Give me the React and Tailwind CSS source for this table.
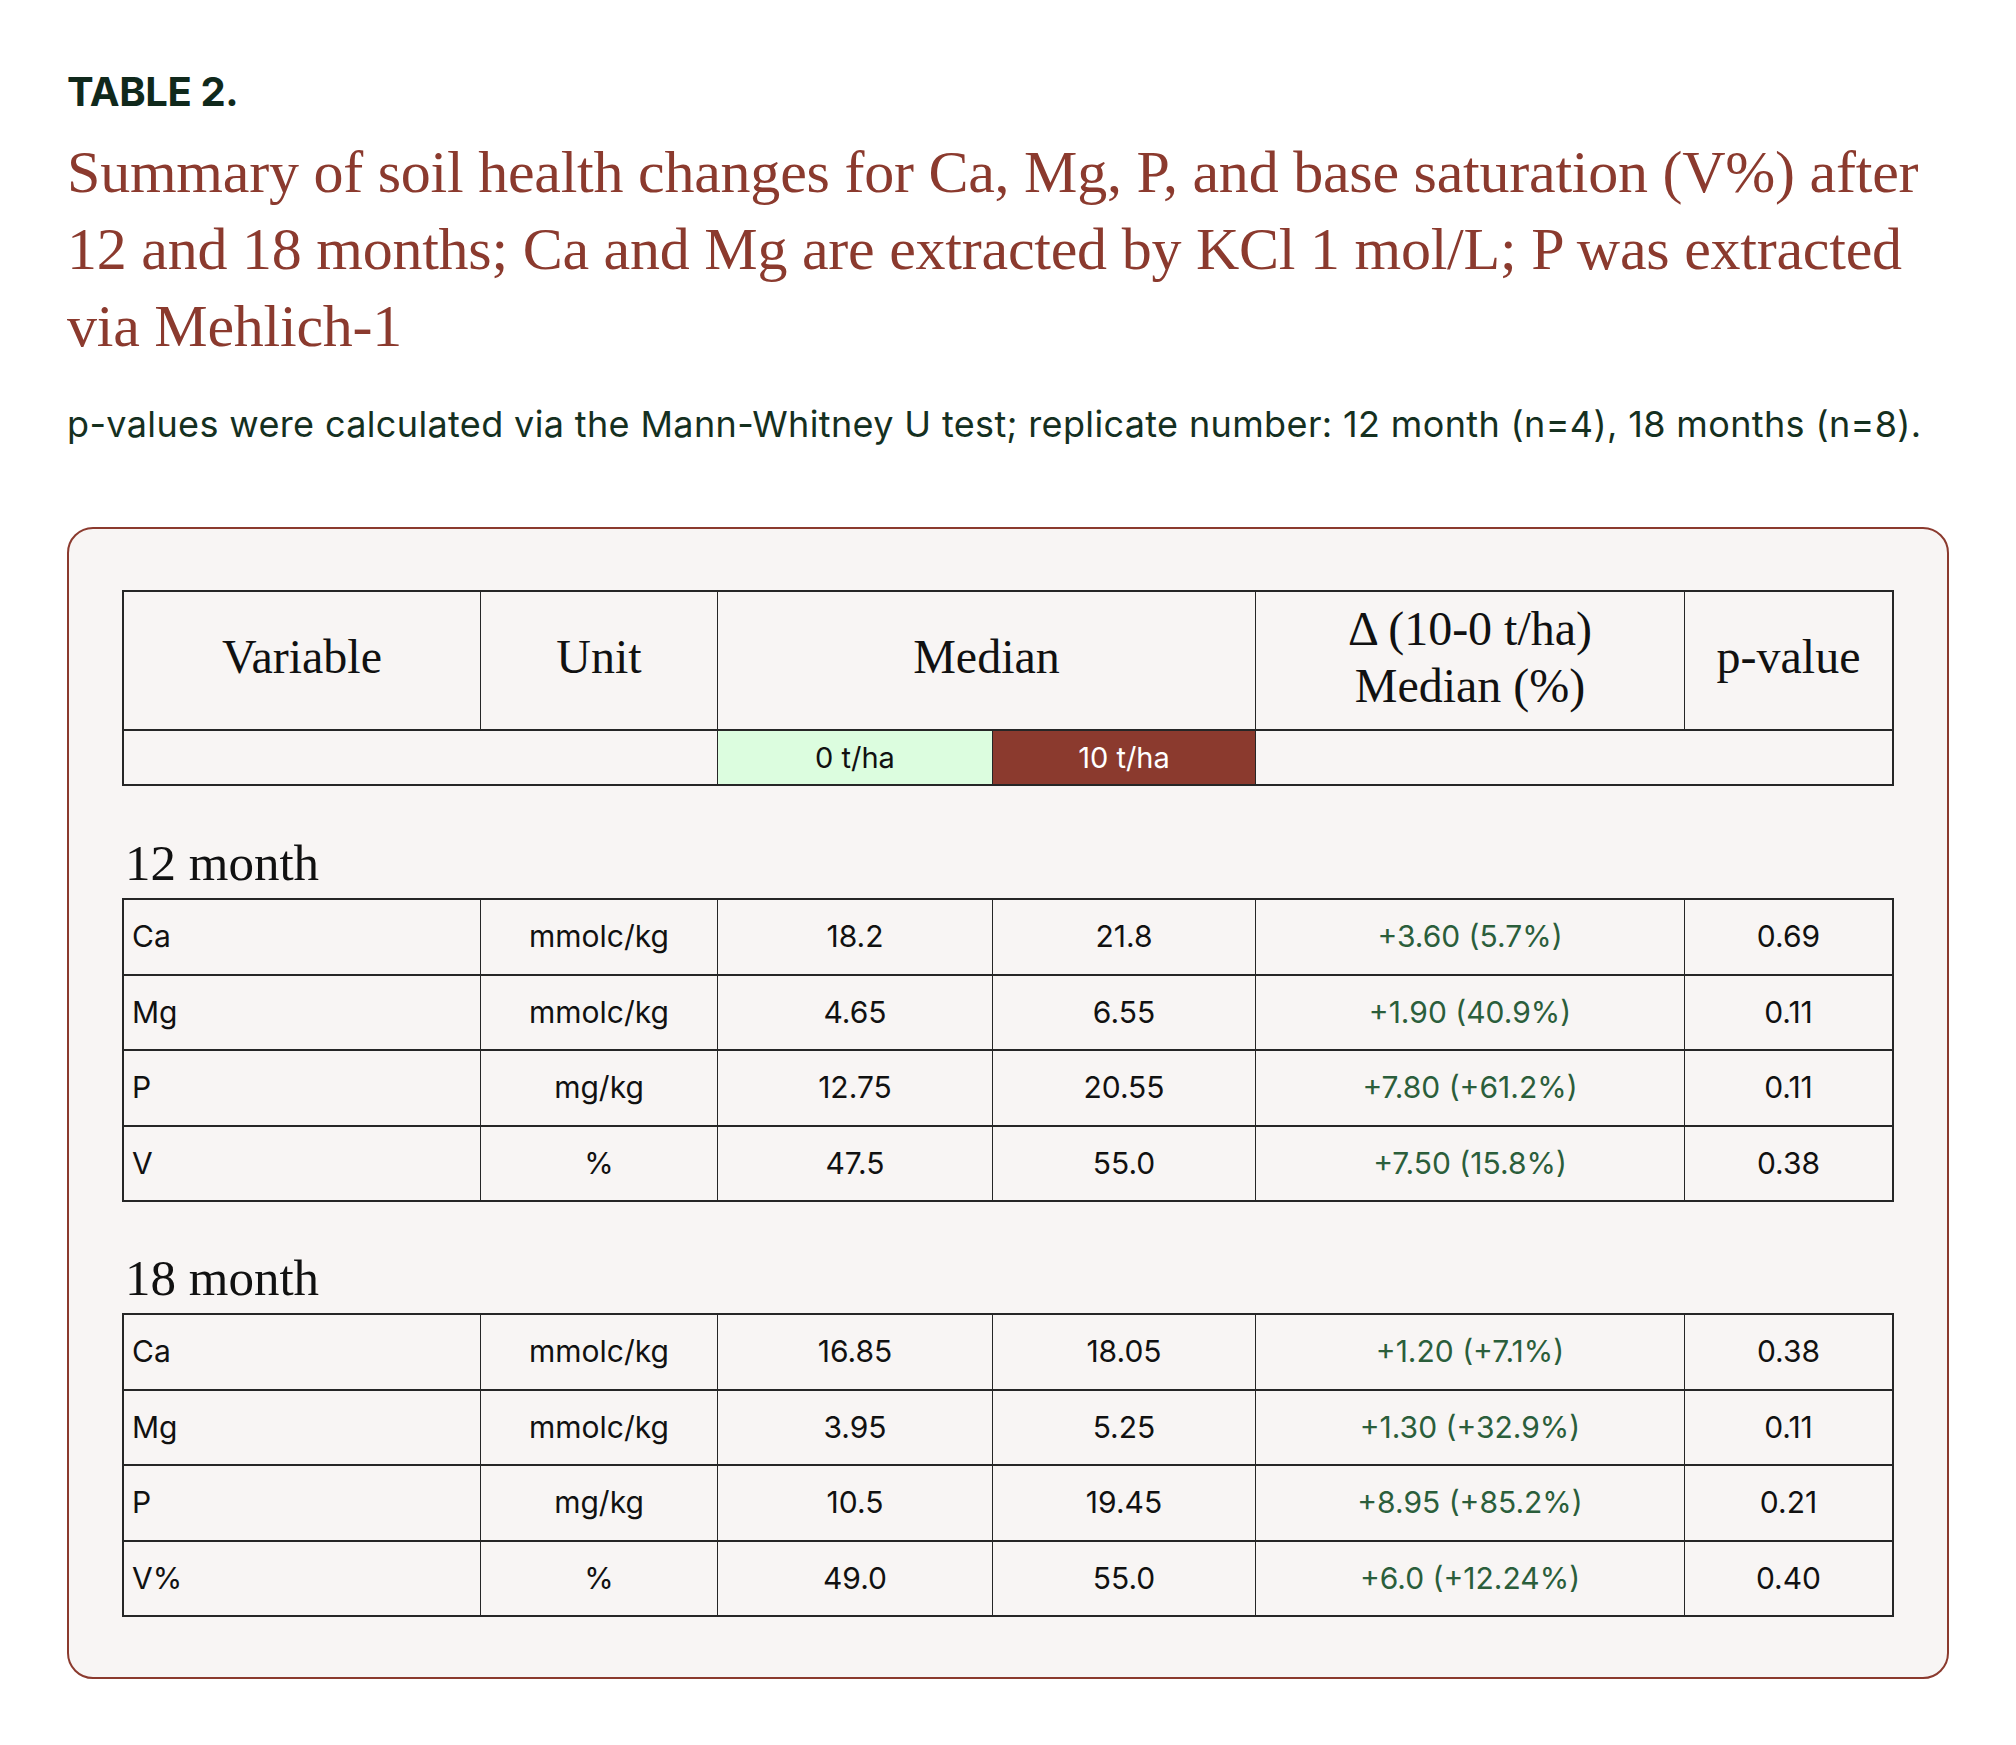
import React from "react";

const serif = { fontFamily: '"Liberation Serif", "Times New Roman", serif' };
const sans = { fontFamily: 'Inter, "Liberation Sans", Arial, sans-serif' };

const cols = "grid grid-cols-[357px_237px_275px_263px_429px_1fr]";

const rows12 = [
  ["Ca", "mmolc/kg", "18.2", "21.8", "+3.60 (5.7%)", "0.69"],
  ["Mg", "mmolc/kg", "4.65", "6.55", "+1.90 (40.9%)", "0.11"],
  ["P", "mg/kg", "12.75", "20.55", "+7.80 (+61.2%)", "0.11"],
  ["V", "%", "47.5", "55.0", "+7.50 (15.8%)", "0.38"],
];

const rows18 = [
  ["Ca", "mmolc/kg", "16.85", "18.05", "+1.20 (+7.1%)", "0.38"],
  ["Mg", "mmolc/kg", "3.95", "5.25", "+1.30 (+32.9%)", "0.11"],
  ["P", "mg/kg", "10.5", "19.45", "+8.95 (+85.2%)", "0.21"],
  ["V%", "%", "49.0", "55.0", "+6.0 (+12.24%)", "0.40"],
];

function DataTable({ rows }) {
  return (
    <div className="border-2 border-[#262626] border-b-0" style={sans}>
      {rows.map((r, i) => (
        <div key={i} className={`${cols} h-[75.5px] border-b-2 border-[#262626] text-[30px] text-[#111111]`}>
          <div className="flex items-center pl-[8px] border-r border-[#262626]">{r[0]}</div>
          <div className="flex items-center justify-center border-r border-[#262626]">{r[1]}</div>
          <div className="flex items-center justify-center border-r border-[#262626]">{r[2]}</div>
          <div className="flex items-center justify-center border-r border-[#262626]">{r[3]}</div>
          <div className="flex items-center justify-center border-r border-[#262626] text-[#2b5e3b]">{r[4]}</div>
          <div className="flex items-center justify-center">{r[5]}</div>
        </div>
      ))}
    </div>
  );
}

export default function App() {
  return (
    <div className="bg-white w-[2016px] min-h-[1745px] px-[67px] pt-[72px]">
      <div className="text-[40px] leading-none font-bold text-[#10291c] tracking-[-0.01em]" style={sans}>
        TABLE 2.
      </div>
      <h1 className="mt-[22px] text-[60px] leading-[77px] text-[#8b3a2e] font-normal tracking-[-0.004em]" style={serif}>
        Summary of soil health changes for Ca, Mg, P, and base saturation (V%) after 12 and 18 months; Ca and Mg are extracted by KCl 1 mol/L; P was extracted via Mehlich-1
      </h1>
      <p className="mt-[37px] text-[36px] leading-[44px] text-[#15301f] tracking-[0.01em]" style={sans}>
        p-values were calculated via the Mann-Whitney U test; replicate number: 12 month (n=4), 18 months (n=8).
      </p>

      <div className="mt-[81px] border-2 border-[#8b3a2e] rounded-[26px] bg-[#f8f5f4] px-[53px] pt-[61px] pb-[60px]">
        {/* Header table */}
        <div className="border-2 border-[#262626] text-[#111111]">
          <div className={`${cols} h-[139px] border-b-2 border-[#262626] text-[48px]`} style={serif}>
            <div className="flex items-center justify-center pb-[8px] border-r border-[#262626]">Variable</div>
            <div className="flex items-center justify-center pb-[8px] border-r border-[#262626]">Unit</div>
            <div className="col-span-2 flex items-center justify-center pb-[8px] border-r border-[#262626]">Median</div>
            <div className="flex flex-col items-center justify-center pb-[8px] border-r border-[#262626] leading-[57px]">
              <span>Δ (10-0 t/ha)</span>
              <span>Median (%)</span>
            </div>
            <div className="flex items-center justify-center pb-[8px]">p-value</div>
          </div>
          <div className={`${cols} h-[53px] text-[29px]`} style={sans}>
            <div className="col-span-2 border-r border-[#262626]"></div>
            <div className="flex items-center justify-center bg-[#dcfddf] border-r border-[#262626]">0 t/ha</div>
            <div className="flex items-center justify-center bg-[#8b3a2e] text-white border-r border-[#262626]">10 t/ha</div>
            <div className="col-span-2"></div>
          </div>
        </div>

        <div className="mt-[52px] mb-[10px] pl-[3px] text-[51px] leading-[50px] text-[#111111]" style={serif}>12 month</div>
        <DataTable rows={rows12} />

        <div className="mt-[51px] mb-[10px] pl-[3px] text-[51px] leading-[50px] text-[#111111]" style={serif}>18 month</div>
        <DataTable rows={rows18} />
      </div>
    </div>
  );
}
